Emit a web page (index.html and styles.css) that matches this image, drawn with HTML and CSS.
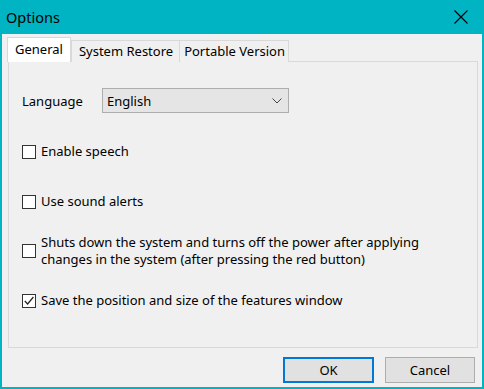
FILE: index.html
```html
<!DOCTYPE html>
<html lang="en">
<head>
  <meta charset="UTF-8">
  <title>Options</title>
  <link rel="stylesheet" href="styles.css">
</head>
<body>
  <div class="window">
    <!-- Title bar -->
    <div class="titlebar">
      <span class="title">Options</span>
      <svg class="close" width="14" height="14" viewBox="0 0 14 14">
        <path d="M0.5 0.5 L13.5 13.5 M13.5 0.5 L0.5 13.5" stroke="#000" stroke-width="1.1" fill="none"/>
      </svg>
    </div>

    <div class="content">
      <!-- Tabs -->
      <div class="tabs">
        <div class="tab active">General</div>
        <div class="tab">System Restore</div>
        <div class="tab narrow">Portable Version</div>
      </div>

      <div class="panel">
        <div class="lang-row">
          <span class="lang-label">Language</span>
          <div class="select">
            <span>English</span>
            <svg width="10" height="6" viewBox="0 0 10 6">
              <path d="M0.5 0.5 L5 5 L9.5 0.5" stroke="#444" stroke-width="1" fill="none"/>
            </svg>
          </div>
        </div>

        <div class="check first">
          <span class="box"></span>
          <span>Enable speech</span>
        </div>

        <div class="check second">
          <span class="box"></span>
          <span>Use sound alerts</span>
        </div>

        <div class="check third">
          <span class="box"></span>
          <span>Shuts down the system and turns off the power after applying<br>changes in the system (after pressing the red button)</span>
        </div>

        <div class="check fourth">
          <span class="box">
            <svg width="12" height="12" viewBox="0 0 12 12">
              <path d="M1.8 6 L4.6 9 L10.4 2" stroke="#222" stroke-width="1.2" fill="none"/>
            </svg>
          </span>
          <span>Save the position and size of the features window</span>
        </div>
      </div>

      <div class="buttons">
        <button class="btn default">OK</button>
        <button class="btn">Cancel</button>
      </div>
    </div>
  </div>
</body>
</html>
```

FILE: styles.css
```css
body { margin: 0; font-family: "Segoe UI", "Noto Sans", Arial, sans-serif; font-size: 13px; color: #000; background: #00b4c4; }
.window { width: 484px; height: 389px; box-sizing: border-box; background: #00b4c4; padding: 0 2px 2px 2px; display: flex; flex-direction: column; }
.titlebar { height: 34px; display: flex; align-items: center; justify-content: space-between; padding: 0 14px 0 4px; }
.title { font-size: 14.5px; }
.close { display: block; }

.content { flex: 1; background: #f0f0f0; padding: 3px 5px 0 5px; }
.tabs { display: flex; align-items: flex-end; height: 25px; position: relative; z-index: 1; }
.tab { height: 22px; box-sizing: border-box; padding: 0 6px 0 7px; border: 1px solid #d9d9d9; border-bottom: none; margin-left: -1px; line-height: 20px; background: #f0f0f0; }
.tab.active { height: 25px; background: #fff; margin-left: 0; margin-right: 1px; padding: 0 7px; line-height: 22px; }
.tab.narrow { padding: 0 3px 0 4px; }

.panel { width: 470px; height: 287px; box-sizing: border-box; margin: -1px 0 0 1px; border: 1px solid #d9d9d9; padding: 0 13px; }

.lang-row { display: flex; align-items: center; margin-top: 26px; height: 25px; }
.lang-label { width: 80px; }
.select { width: 187px; height: 25px; box-sizing: border-box; border: 1px solid #adadad; background: #e5e5e5; display: flex; align-items: center; justify-content: space-between; padding: 0 6px 0 4px; }

.check { display: flex; align-items: center; gap: 5px; line-height: 17px; }
.box { width: 14px; height: 14px; box-sizing: border-box; border: 1px solid #333; background: #fff; flex: none; display: flex; align-items: center; justify-content: center; }
.box svg { display: block; }
.first { margin-top: 30px; }
.second { margin-top: 33px; }
.third { margin-top: 24px; }
.fourth { margin-top: 24px; }

.buttons { display: flex; justify-content: flex-end; gap: 11px; margin-top: 9px; padding-right: 2px; }
.btn { width: 90px; height: 26px; box-sizing: border-box; border: 1px solid #adadad; background: #e1e1e1; font-family: inherit; font-size: 13px; color: #000; padding: 0; }
.btn.default { width: 91px; border: 2px solid #0078d7; }
```
